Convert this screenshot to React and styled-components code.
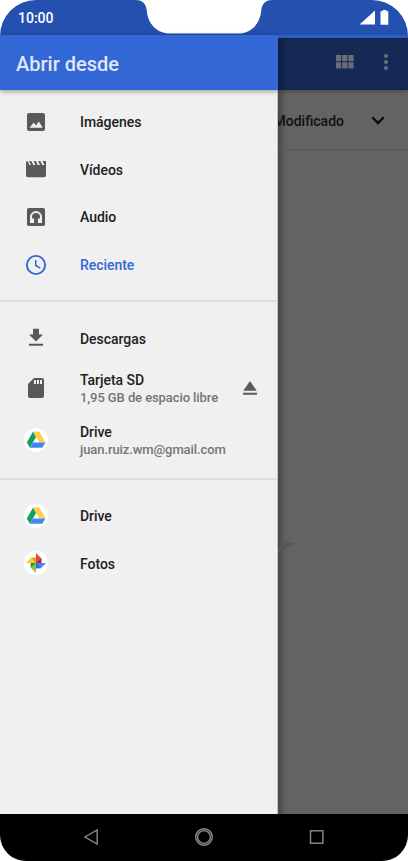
import React from 'react';
import styled, { createGlobalStyle } from 'styled-components';

const ImageIcon = () => (
  <svg width="24" height="24" viewBox="0 0 24 24" fill="currentColor">
    <path d="M21 19V5c0-1.100-.9-2-2-2H5c-1.100 0-2 .9-2 2v14c0 1.100.9 2 2 2h14c1.100 0 2-.9 2-2zM9.700 12.500l2.200 3 2.900-4L18.700 17.800H5.500z" />
  </svg>
)

const MovieIcon = () => (
  <svg width="24" height="24" viewBox="0 0 24 24" fill="currentColor">
    <path d="M18.500 4l2 4h-2.200l-2-4h-2.300l2 4h-2.200l-2-4H9.500l2 4H9.300l-2-4H5l2 4H5.300l-1.600-4C2.700 4 2 4.700 2 6V18.300c0 1.100.9 2 2 2h16c1.100 0 2-.9 2-2V4z" />
  </svg>
)

const AudioIcon = () => (
  <svg width="24" height="24" viewBox="0 0 24 24">
    <rect x="3" y="3" width="18" height="18" rx="1.800" fill="currentColor" />
    <path d="M6 18v-6a6 6 0 0 1 12 0v6h-4v-4.500h2V12a4 4 0 0 0-8 0v1.500h2V18z" fill="#f0f0f0" />
  </svg>
)

const ClockIcon = () => (
  <svg width="24" height="24" viewBox="0 0 24 24" fill="none" stroke="currentColor">
    <circle cx="12" cy="12" r="9.100" strokeWidth="1.900" />
    <path d="M11.700 7v5.500l4.600 2.700" strokeWidth="1.500" />
  </svg>
)

const DownloadIcon = () => (
  <svg width="24" height="24" viewBox="0 0 24 24" fill="currentColor">
    <path d="M19 8.500h-4V2.700H9V8.500H5l7 7zM5 17.700v2h14v-2z" />
  </svg>
)

const SdIcon = () => (
  <svg width="24" height="24" viewBox="0 0 24 24" fill="currentColor">
    <path d="M18 2h-8L4.020 8 4 20c0 1.100.9 2 2 2h12c1.100 0 2-.9 2-2V4c0-1.100-.9-2-2-2zm-6 6h-2V4h2v4zm3 0h-2V4h2v4zm3 0h-2V4h2v4z" />
  </svg>
)

const EjectIcon = () => (
  <svg width="24" height="24" viewBox="0 0 24 24" fill="currentColor">
    <path d="M12 5l-6.700 9.800h13.400zM5 16.800h14v2H5z" />
  </svg>
)

const DriveIcon = () => (
  <svg width="24" height="24" viewBox="0 0 24 24">
    <circle cx="12" cy="12" r="12" fill="#fff" />
    <path d="M9.100 3.500L2.800 14.600 5.900 19.800 12.100 8.900z" fill="#12a05c" />
    <path d="M9.100 3.500h6.200l6.200 11h-6.200z" fill="#ffcf48" />
    <path d="M9 14.600h12.500l-3.200 5.200H5.900z" fill="#4285f4" />
  </svg>
)

const PhotosIcon = () => (
  <svg width="24" height="24" viewBox="0 0 24 24">
    <circle cx="12" cy="12" r="12" fill="#fff" />
    <path d="M12 2l5.300 5.300V12H12z" fill="#e04a3f" />
    <path d="M12 12l5.300-4.700V12z" fill="#b3195b" />
    <path d="M22 12l-5.200 5.300H12V12z" fill="#4285f4" />
    <path d="M12 12l4.800 5.300H12z" fill="#3367d6" />
    <path d="M12 22l-5.200-5.300V12H12z" fill="#8bc34a" />
    <path d="M12 12l-5.200 4.700V12z" fill="#109d58" />
    <path d="M2 12l5.200-5.200H12V12z" fill="#ffc928" />
    <path d="M12 12L7.200 6.800H12z" fill="#f7941d" />
  </svg>
)

const sections = [
  [
    { title: 'Imágenes', icon: <ImageIcon /> },
    { title: 'Vídeos', icon: <MovieIcon /> },
    { title: 'Audio', icon: <AudioIcon /> },
    { title: 'Reciente', icon: <ClockIcon />, active: true },
  ],
  [
    { title: 'Descargas', icon: <DownloadIcon /> },
    { title: 'Tarjeta SD', detail: '1,95 GB de espacio libre', icon: <SdIcon />, eject: true },
    { title: 'Drive', detail: 'juan.ruiz.wm@gmail.com', icon: <DriveIcon /> },
  ],
  [
    { title: 'Drive', icon: <DriveIcon /> },
    { title: 'Fotos', icon: <PhotosIcon /> },
  ],
]

const App = () => {
  return (
    <Phone>
      <GlobalStyle />
      <StatusBar>
        <Clock>10:00</Clock>
        <Notch width="136" height="35" viewBox="0 0 136 35">
          <path d="M0 0C7 0 10 4 10.800 11 12 24 21 33.500 34 33.500H102C115 33.500 124 24 125.200 11 126 4 129 0 136 0z" fill="#fff" />
        </Notch>
        <StatusIcons>
          <svg width="31" height="16" viewBox="0 0 31 16" fill="#fff">
            <path d="M0.500 14.500L16 0.500V14.500zM23.600 1.300V0h3.800v1.300h1.900V14.700h-7.800V1.300z" />
          </svg>
        </StatusIcons>
      </StatusBar>

      <Main>
        <Drawer>
          <DrawerHeader>Abrir desde</DrawerHeader>
          {
            sections.map((rows, index) => {
              return (
                <Section key={index}>
                  {rows.map((row, i) => (
                    <Row key={i} $tall={row.detail} $active={row.active}>
                      {row.icon}
                      <Label $tall={row.detail}>
                        <h3>{row.title}</h3>
                        {row.detail && <p>{row.detail}</p>}
                      </Label>
                      {row.eject && <EjectIcon />}
                    </Row>
                  ))}
                </Section>
              )
            })
          }
        </Drawer>

        <Shaded>
          <Toolbar>
            <svg width="18" height="14" viewBox="0 0 18 14" fill="#6b6e76">
              <path d="M0 0h5.200v6.200H0zM6.200 0h5.200v6.200H6.200zM12.400 0h5.200v6.200h-5.200zM0 7.200h5.200v6.200H0zM6.200 7.200h5.200v6.200H6.200zM12.400 7.200h5.200v6.200h-5.200z" />
            </svg>
            <svg width="6" height="18" viewBox="0 0 6 18" fill="#6b6e76">
              <circle cx="3" cy="3" r="2.100" />
              <circle cx="3" cy="9" r="2.100" />
              <circle cx="3" cy="15" r="2.100" />
            </svg>
          </Toolbar>
          <SortBar>
            <span>Modificado</span>
            <svg width="14" height="9" viewBox="0 0 14 9" fill="none" stroke="#0a0a0a" strokeWidth="2.300">
              <path d="M1.200 1.200L7 7l5.800-5.800" />
            </svg>
          </SortBar>
          <Empty>
            <svg width="18" height="12" viewBox="0 0 18 12" fill="#575757">
              <path d="M0 7.500L7 4.500V1l10 1.500L0 11z" />
            </svg>
          </Empty>
        </Shaded>
      </Main>

      <NavBar>
        <svg width="20" height="20" viewBox="0 0 20 20">
          <path d="M3.900 10L16.200 3v14z" />
        </svg>
        <svg width="20" height="20" viewBox="0 0 20 20">
          <circle cx="10" cy="10" r="8.300" />
          <circle cx="10" cy="10" r="6.400" />
        </svg>
        <svg width="20" height="20" viewBox="0 0 20 20">
          <rect x="3.500" y="3.800" width="12.400" height="12.400" />
        </svg>
      </NavBar>
    </Phone>
  )
}

export default App

const GlobalStyle = createGlobalStyle`
  *{
    box-sizing: border-box;
  }
  body{
    margin: 0;
    background: #fff;
    font-family: Roboto, sans-serif;
  }
  svg{
    display: block;
    flex-shrink: 0;
  }
`

const Phone = styled.div`
  width: 408px;
  height: 861px;
  display: flex;
  flex-direction: column;
  overflow: hidden;
  border-radius: 36px 36px 26px 26px;
`

const StatusBar = styled.header`
  height: 35px;
  display: grid;
  grid-template-columns: 136px 136px 136px;
  background: #2450b0;
`

const Clock = styled.div`
  padding: 9px 0 0 18px;
  font-size: 14px;
  line-height: 18px;
  font-weight: 500;
  color: #fff;
`

const Notch = styled.svg`
  height: 35px;
`

const StatusIcons = styled.div`
  display: flex;
  justify-content: flex-end;
  padding: 10px 18px 0 0;
`

const Main = styled.main`
  flex: 1;
  min-height: 0;
  display: flex;
`

const Drawer = styled.aside`
  width: 278px;
  flex-shrink: 0;
  background: #f0f0f0;
  border-right: 1px solid #c4c4c4;
`

const DrawerHeader = styled.h1`
  height: 55px;
  width: 278px;
  margin: 0;
  padding-left: 16px;
  font-size: 20px;
  line-height: 58px;
  font-weight: 500;
  color: #e0e8f9;
  background: #3367d6;
  box-shadow: 0 1px 5px rgba(0, 0, 0, 0.4);
`

const Section = styled.section`
  padding: 12px 0;
  &:nth-of-type(1){
    padding-top: 8px;
  }
  & + &{
    border-top: 2px solid #dedede;
  }
`

const Row = styled.div`
  height: ${props => props.$tall ? '52px' : '47.600px'};
  display: flex;
  align-items: center;
  padding: 0 15px 0 24px;
  color: ${props => props.$active ? '#3367d6' : '#595959'};
  h3{
    color: ${props => props.$active ? '#3367d6' : '#212121'};
  }
`

const Label = styled.div`
  flex: 1;
  margin-left: 32px;
  padding-top: ${props => props.$tall ? '2px' : '1px'};
  white-space: nowrap;
  h3,p{
    margin: 0;
    font-size: 14px;
    line-height: 18px;
    font-weight: 500;
    letter-spacing: -0.040px;
  }
  p{
    font-size: 13px;
    letter-spacing: -0.090px;
    color: #757575;
  }
`

const Shaded = styled.div`
  flex: 1;
  min-width: 0;
  overflow: hidden;
  display: flex;
  flex-direction: column;
  border-top: 3px solid #2d5dc4;
  background: #636363;
  box-shadow: inset 8px 0 7px -5px rgba(0, 0, 0, 0.35);
`

const Toolbar = styled.div`
  height: 52px;
  display: flex;
  align-items: center;
  justify-content: flex-end;
  gap: 29px;
  padding: 0 19px 4px 0;
  background: #152856;
  box-shadow: inset 8px 0 7px -5px rgba(0, 0, 0, 0.35), 0 1px 5px rgba(0, 0, 0, 0.3);
`

/* the label runs under the drawer, so its first letter is partly hidden */
const SortBar = styled.div`
  height: 60px;
  display: flex;
  align-items: center;
  justify-content: flex-end;
  gap: 27px;
  padding: 2px 23px 0 0;
  font-size: 14px;
  font-weight: 500;
  color: #111;
  border-bottom: 1px solid #555;
`

const Empty = styled.div`
  flex: 1;
  padding-top: 391px;
`

const NavBar = styled.nav`
  height: 47px;
  display: flex;
  justify-content: center;
  align-items: center;
  gap: 93px;
  padding-bottom: 1px;
  background: #000;
  svg{
    fill: none;
    stroke: #8c8c8c;
    stroke-width: 1.400;
  }
`
